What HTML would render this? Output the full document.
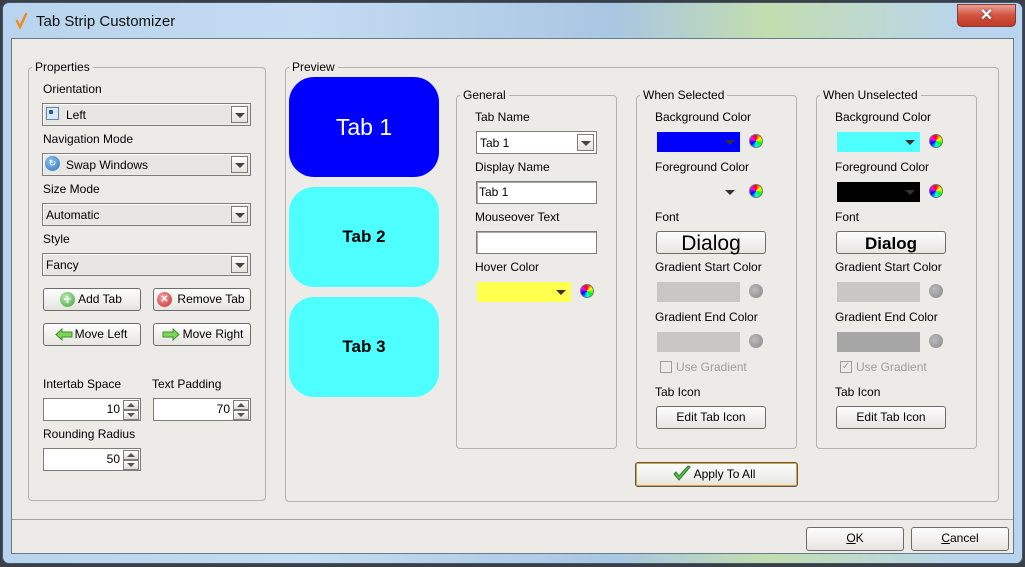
<!DOCTYPE html>
<html><head><meta charset="utf-8">
<style>
*{box-sizing:border-box;margin:0;padding:0}
body{width:1025px;height:567px;overflow:hidden;background:#3a3f48;font-family:"Liberation Sans",sans-serif;font-size:12px;color:#000;position:relative}
.a{position:absolute}
.frame{left:2px;top:2px;width:1021px;height:562px;background:linear-gradient(90deg,#b9d4ee 0%,#c4dbf2 30%,#a9c6e2 60%,#c3ddb0 75%,#b9d4ee 95%);border:1px solid #44566a;border-radius:7px}
.content{left:11px;top:38px;width:1003px;height:516px;background:#ecebe7;border:1px solid #6a7a8a}
.fs{border:1px solid #b4b2ad;border-radius:4px}
.lg{background:#ecebe7;padding:0 3px;line-height:13px}
.lb{white-space:nowrap;line-height:14px}
.combo{background:#ecebe7;border:1px solid #7f7d78;box-shadow:inset 1px 1px 0 #fff}
.combo .in{position:absolute;left:1px;top:1px;right:20px;bottom:1px;background:#e7e6e2;padding-left:2px;line-height:20px}
.dd{position:absolute;right:2px;top:2px;width:17px;height:17px;border:1px solid #7f7d78;background:linear-gradient(#fff,#e4e2dc)}
.dd:after{content:"";position:absolute;left:3px;top:6px;border-left:5px solid transparent;border-right:5px solid transparent;border-top:5px solid #444}
.btn{border:1px solid #6e6c68;border-radius:3px;background:linear-gradient(#fdfdfd,#e6e5e1);text-align:center;line-height:21px;white-space:nowrap}
.tf{background:#fff;border:1px solid #7f7d78;box-shadow:inset 1px 1px 0 #aaa;padding-left:2px;line-height:20px}
.spin{background:#fff;border:1px solid #7f7d78;text-align:right;padding-right:20px;line-height:21px}
.sp{position:absolute;right:1px;width:16px;height:10px;border:1px solid #7f7d78;background:linear-gradient(#fff,#dedcd6)}
.sp.u:after{content:"";position:absolute;left:3px;top:2px;border-left:4px solid transparent;border-right:4px solid transparent;border-bottom:4px solid #555}
.sp.d:after{content:"";position:absolute;left:3px;top:2px;border-left:4px solid transparent;border-right:4px solid transparent;border-top:4px solid #555}
.tab{border-radius:25px;text-align:center;line-height:100px}
.wheel{width:14px;height:14px;border-radius:50%;background:conic-gradient(red,yellow,lime,cyan,blue,magenta,red);border:1px solid #777}
.gdot{width:14px;height:14px;border-radius:50%;background:radial-gradient(circle at 40% 40%,#bbb,#888)}
.arr{width:0;height:0;border-left:5px solid transparent;border-right:5px solid transparent;border-top:5px solid #333}
.dis{color:#a09e9a}
</style></head><body>
<div class="a frame"></div>
<svg class="a" style="left:14px;top:12px" width="14" height="18" viewBox="0 0 14 18"><path d="M3 9 L6 15 L12 2" stroke="#f08a20" stroke-width="2.5" fill="none" stroke-linecap="round"/></svg>
<div class="a" style="left:36px;top:13px;font-size:15px;color:#111">Tab Strip Customizer</div>
<div class="a" style="left:957px;top:4px;width:59px;height:23px;border:1px solid #8a3a30;border-radius:0 0 5px 5px;background:linear-gradient(#e9a096,#d2533e 50%,#c03a25);color:#fff;font-weight:bold;font-size:16px;text-align:center;line-height:21px;text-shadow:0 0 2px #444">✕</div>
<div class="a content"></div>

<div class="a fs" style="left:28px;top:67px;width:238px;height:434px"></div>
<div class="a lg" style="left:32px;top:61px">Properties</div>
<div class="a lb" style="left:43px;top:82px">Orientation</div>
<div class="a combo" style="left:42px;top:103px;width:209px;height:23px"><div class="in" style="padding-left:22px">Left</div><div class="dd"></div></div>
<div class="a" style="left:46px;top:107px;width:13px;height:13px;border:1px solid #5b87b8;background:#dbe8f5"><div style="position:absolute;left:2px;top:2px;width:4px;height:4px;background:#2b5d9b"></div></div>
<div class="a lb" style="left:43px;top:132px">Navigation Mode</div>
<div class="a combo" style="left:42px;top:153px;width:209px;height:23px"><div class="in" style="padding-left:22px">Swap Windows</div><div class="dd"></div></div>
<div class="a" style="left:45px;top:156px;width:15px;height:15px;border-radius:50%;background:radial-gradient(circle at 40% 35%,#8cc4f0,#2f6fb5);color:#fff;font-size:9px;text-align:center;line-height:15px">↻</div>
<div class="a lb" style="left:43px;top:182px">Size Mode</div>
<div class="a combo" style="left:42px;top:203px;width:209px;height:23px"><div class="in">Automatic</div><div class="dd"></div></div>
<div class="a lb" style="left:43px;top:232px">Style</div>
<div class="a combo" style="left:42px;top:253px;width:209px;height:23px"><div class="in">Fancy</div><div class="dd"></div></div>

<div class="a btn" style="left:43px;top:288px;width:98px;height:23px;padding-left:16px">Add Tab</div>
<div class="a" style="left:60px;top:292px;width:15px;height:15px;border-radius:50%;background:radial-gradient(circle at 40% 35%,#b8eab0,#3ea33a);color:#fff;font-weight:bold;font-size:14px;line-height:15px;text-align:center">+</div>
<div class="a btn" style="left:153px;top:288px;width:98px;height:23px;padding-left:18px">Remove Tab</div>
<div class="a" style="left:157px;top:292px;width:15px;height:15px;border-radius:50%;background:radial-gradient(circle at 40% 35%,#f4a2a2,#c82a2a);color:#fff;font-weight:bold;font-size:10px;line-height:15px;text-align:center">✕</div>
<div class="a btn" style="left:43px;top:323px;width:98px;height:23px;padding-left:18px">Move Left</div>
<svg class="a" style="left:55px;top:328px" width="18" height="13"><path d="M1 6.5 L7 1 V4 H17 V9 H7 V12 Z" fill="#7fd45a" stroke="#3f8f2a"/></svg>
<div class="a btn" style="left:153px;top:323px;width:98px;height:23px;padding-left:22px">Move Right</div>
<svg class="a" style="left:162px;top:328px" width="18" height="13"><path d="M17 6.5 L11 1 V4 H1 V9 H11 V12 Z" fill="#7fd45a" stroke="#3f8f2a"/></svg>

<div class="a lb" style="left:43px;top:377px">Intertab Space</div>
<div class="a lb" style="left:152px;top:377px">Text Padding</div>
<div class="a spin" style="left:43px;top:398px;width:98px;height:23px">10<div class="sp u" style="top:1px"></div><div class="sp d" style="top:11px"></div></div>
<div class="a spin" style="left:153px;top:398px;width:98px;height:23px">70<div class="sp u" style="top:1px"></div><div class="sp d" style="top:11px"></div></div>
<div class="a lb" style="left:43px;top:427px">Rounding Radius</div>
<div class="a spin" style="left:43px;top:448px;width:98px;height:23px">50<div class="sp u" style="top:1px"></div><div class="sp d" style="top:11px"></div></div>

<div class="a fs" style="left:285px;top:67px;width:714px;height:435px"></div>
<div class="a lg" style="left:289px;top:61px">Preview</div>
<div class="a tab" style="left:289px;top:77px;width:150px;height:100px;background:#0000ff;color:#fff;font-size:23px">Tab 1</div>
<div class="a tab" style="left:289px;top:187px;width:150px;height:100px;background:#4dffff;font-size:17px;font-weight:bold">Tab 2</div>
<div class="a tab" style="left:289px;top:297px;width:150px;height:100px;background:#4dffff;font-size:17px;font-weight:bold">Tab 3</div>

<div class="a fs" style="left:456px;top:95px;width:161px;height:354px"></div>
<div class="a lg" style="left:460px;top:89px">General</div>
<div class="a lb" style="left:475px;top:110px">Tab Name</div>
<div class="a combo" style="left:476px;top:131px;width:121px;height:23px;background:#fff"><div class="in" style="background:#fff">Tab 1</div><div class="dd"></div></div>
<div class="a lb" style="left:475px;top:160px">Display Name</div>
<div class="a tf" style="left:476px;top:181px;width:121px;height:23px">Tab 1</div>
<div class="a lb" style="left:475px;top:210px">Mouseover Text</div>
<div class="a tf" style="left:476px;top:231px;width:121px;height:23px"></div>
<div class="a lb" style="left:475px;top:260px">Hover Color</div>
<div class="a" style="left:477px;top:282px;width:94px;height:20px;background:#ffff4d"></div>
<div class="a arr" style="left:556px;top:290px"></div>
<div class="a wheel" style="left:580px;top:284px"></div>

<div class="a fs" style="left:636px;top:95px;width:161px;height:354px"></div>
<div class="a lg" style="left:640px;top:89px">When Selected</div>
<div class="a fs" style="left:816px;top:95px;width:161px;height:354px"></div>
<div class="a lg" style="left:820px;top:89px">When Unselected</div>

<div class="a lb" style="left:655px;top:110px">Background Color</div>
<div class="a" style="left:657px;top:132px;width:83px;height:20px;background:#0000ff"></div>
<div class="a arr" style="left:725px;top:140px"></div>
<div class="a wheel" style="left:749px;top:134px"></div>
<div class="a lb" style="left:655px;top:160px">Foreground Color</div>
<div class="a arr" style="left:725px;top:190px"></div>
<div class="a wheel" style="left:749px;top:184px"></div>
<div class="a lb" style="left:655px;top:210px">Font</div>
<div class="a btn" style="left:656px;top:231px;width:110px;height:23px;font-size:21px;line-height:23px">Dialog</div>
<div class="a lb" style="left:655px;top:260px">Gradient Start Color</div>
<div class="a" style="left:657px;top:282px;width:83px;height:20px;background:#c8c7c4"></div>
<div class="a gdot" style="left:749px;top:284px"></div>
<div class="a lb" style="left:655px;top:310px">Gradient End Color</div>
<div class="a" style="left:657px;top:332px;width:83px;height:20px;background:#c8c7c4"></div>
<div class="a gdot" style="left:749px;top:334px"></div>
<div class="a" style="left:660px;top:361px;width:12px;height:12px;border:1px solid #a09e9a;background:#ecebe7"></div>
<div class="a lb dis" style="left:676px;top:360px">Use Gradient</div>
<div class="a lb" style="left:655px;top:385px">Tab Icon</div>
<div class="a btn" style="left:656px;top:406px;width:110px;height:23px">Edit Tab Icon</div>

<div class="a lb" style="left:835px;top:110px">Background Color</div>
<div class="a" style="left:837px;top:132px;width:83px;height:20px;background:#4dffff"></div>
<div class="a arr" style="left:905px;top:140px"></div>
<div class="a wheel" style="left:929px;top:134px"></div>
<div class="a lb" style="left:835px;top:160px">Foreground Color</div>
<div class="a" style="left:837px;top:182px;width:83px;height:20px;background:#000"></div>
<div class="a arr" style="left:905px;top:190px;border-top-color:#333"></div>
<div class="a wheel" style="left:929px;top:184px"></div>
<div class="a lb" style="left:835px;top:210px">Font</div>
<div class="a btn" style="left:836px;top:231px;width:110px;height:23px;font-size:17px;font-weight:bold;line-height:23px">Dialog</div>
<div class="a lb" style="left:835px;top:260px">Gradient Start Color</div>
<div class="a" style="left:837px;top:282px;width:83px;height:20px;background:#c8c7c4"></div>
<div class="a gdot" style="left:929px;top:284px"></div>
<div class="a lb" style="left:835px;top:310px">Gradient End Color</div>
<div class="a" style="left:837px;top:332px;width:83px;height:20px;background:#a6a6a6"></div>
<div class="a gdot" style="left:929px;top:334px"></div>
<div class="a" style="left:840px;top:361px;width:12px;height:12px;border:1px solid #a09e9a;background:#ecebe7;color:#a09e9a;font-size:10px;line-height:10px;text-align:center">✓</div>
<div class="a lb dis" style="left:856px;top:360px">Use Gradient</div>
<div class="a lb" style="left:835px;top:385px">Tab Icon</div>
<div class="a btn" style="left:836px;top:406px;width:110px;height:23px">Edit Tab Icon</div>

<div class="a btn" style="left:635px;top:462px;width:163px;height:25px;border-color:#5c5a56;box-shadow:inset 0 0 0 1px #e0a030;padding-left:16px;line-height:23px">Apply To All</div>
<svg class="a" style="left:673px;top:465px" width="18" height="17"><path d="M1 9 L6 15 L17 2 L15 1 L6 11 L3 7 Z" fill="#5cc24a" stroke="#2f7a22"/></svg>

<div class="a" style="left:12px;top:519px;width:1001px;height:1px;background:#a5a3a0"></div>
<div class="a btn" style="left:806px;top:527px;width:98px;height:24px"><u>O</u>K</div>
<div class="a btn" style="left:911px;top:527px;width:98px;height:24px"><u>C</u>ancel</div>
</body></html>
